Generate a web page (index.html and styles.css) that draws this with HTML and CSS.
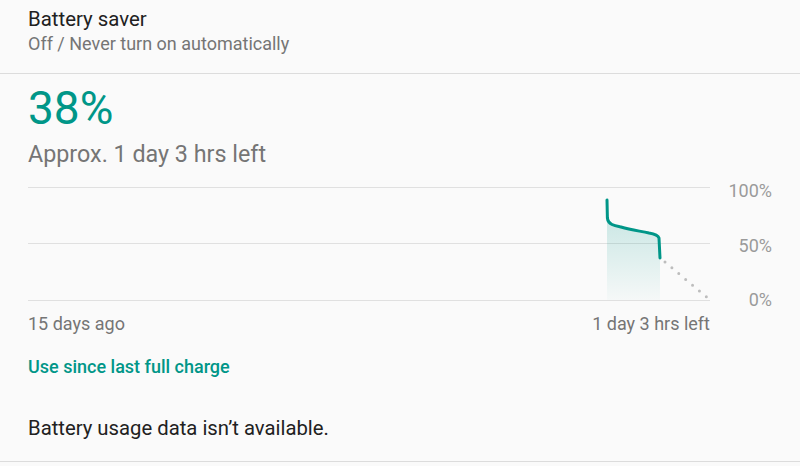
FILE: index.html
```html
<!DOCTYPE html>
<html>
<head>
	<title>Battery</title>
	<link rel="stylesheet" href="styles.css">
</head>
<body>
	<div class="saver">
		<div class="saver-title">Battery saver</div>
		<div class="saver-summary">Off / Never turn on automatically</div>
	</div>
	<div class="divider"></div>

	<div class="battery">
		<div class="percent">38%</div>
		<div class="estimate">Approx. 1 day 3 hrs left</div>

		<div class="chart">
			<svg class="chart-graph" width="682" height="127" viewBox="0 0 682 127">
				<defs>
					<linearGradient id="fade" x1="0" y1="0" x2="0" y2="1">
						<stop offset="0" stop-color="#009688" stop-opacity="0.18"/>
						<stop offset="1" stop-color="#009688" stop-opacity="0.02"/>
					</linearGradient>
				</defs>
				<!-- grid lines -->
				<line x1="0" y1="5.5"   x2="682" y2="5.5"   class="grid"/>
				<line x1="0" y1="61.5"  x2="682" y2="61.5"  class="grid"/>
				<line x1="0" y1="118.5" x2="682" y2="118.5" class="grid"/>
				<!-- used area -->
				<path d="M579 40 C582 43 588 44 593 45 C603 48 612 49 621 51 C627 52 630 53 631 56 L632 76 L632 118 L579 118 Z" fill="url(#fade)"/>
				<path d="M579 18 L579.4 36 C580 43 588 44 593 45 C603 48 612 49 621 51 C627 52 630 53 631 56 L632 76" class="used"/>
				<!-- projection -->
				<path d="M637 80 L681 117" class="projected"/>
			</svg>
			<div class="chart-scale">
				<span>100%</span>
				<span>50%</span>
				<span>0%</span>
			</div>
		</div>
		<div class="chart-axis">
			<span>15 days ago</span>
			<span>1 day 3 hrs left</span>
		</div>
	</div>

	<div class="link">Use since last full charge</div>
	<div class="usage">Battery usage data isn’t available.</div>
	<div class="divider"></div>
</body>
</html>
```

FILE: styles.css
```css
body, html {
	margin: 0;
	padding: 0;
	background-color: #fafafa;
	font-family: Roboto, "Noto Sans", sans-serif;
}
.saver {
	padding: 7px 28px 0 28px;
	height: 66px;
}
.saver-title {
	font-size: 20.4px;
	line-height: 24px;
	color: #212121;
}
.saver-summary {
	margin-top: 2px;
	font-size: 18px;
	line-height: 22px;
	color: #757575;
}
.divider {
	height: 1px;
	background-color: #dcdcdc;
}
.battery {
	padding: 0 28px;
}
.percent {
	margin-top: 7px;
	font-size: 46px;
	line-height: 54px;
	color: #009688;
}
.estimate {
	margin-top: 5px;
	font-size: 23.3px;
	line-height: 28px;
	color: #757575;
}
.chart {
	margin-top: 14px;
	display: flex;
	height: 127px;
}
.chart-graph {
	display: block;
	flex: none;
}
.grid {
	stroke: #e0e0e0;
	stroke-width: 1;
}
.used {
	fill: none;
	stroke: #009688;
	stroke-width: 3;
	stroke-linecap: round;
	stroke-linejoin: round;
}
.projected {
	fill: none;
	stroke: #bdbdbd;
	stroke-width: 3;
	stroke-linecap: round;
	stroke-dasharray: 0 9;
}
.chart-scale {
	flex: 1;
	display: flex;
	flex-direction: column;
	justify-content: space-between;
	align-items: flex-end;
	font-size: 18px;
	line-height: 18px;
	color: #9a9a9a;
}
.chart-axis {
	width: 682px;
	margin-top: 4px;
	display: flex;
	justify-content: space-between;
	font-size: 18px;
	line-height: 22px;
	color: #757575;
}
.link {
	margin-top: 21px;
	padding: 0 28px;
	font-size: 18px;
	line-height: 22px;
	font-weight: 500;
	color: #009688;
}
.usage {
	margin-top: 38px;
	margin-bottom: 21px;
	padding: 0 28px;
	font-size: 20.3px;
	line-height: 24px;
	color: #212121;
}
```
